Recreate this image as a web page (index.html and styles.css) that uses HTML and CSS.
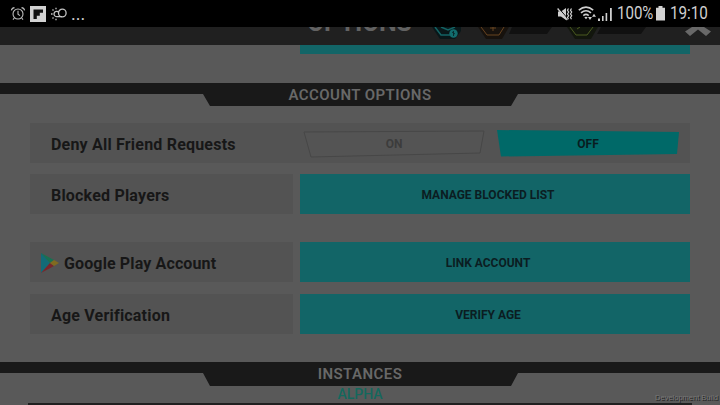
FILE: index.html
```html
<!DOCTYPE html>
<html lang="en">
<head>
<meta charset="utf-8">
<title>Options</title>
<link rel="stylesheet" href="styles.css">
</head>
<body>
<div class="statusbar">
  <div class="status-left">
    <svg width="16" height="16" viewBox="0 0 16 16" fill="none" stroke="#bdbdbd" stroke-width="1.1"><circle cx="8" cy="8" r="5"/><path d="M8 4.800V8.300L10 9.600M1.400 4.400Q1.800 2 4.500 1.600M14.600 4.400Q14.200 2 11.500 1.600M4.300 12L3 13.600M11.700 12L13 13.600"/></svg>
    <svg class="flip" width="16" height="16" viewBox="0 0 16 16"><path fill="#d2d2d2" d="M0 0h16v16H0z"/><path fill="#111" d="M3.500 3.500h9.500v3.200H9.800v3.100H6.800v3.200H3.500z"/></svg>
    <svg class="weather" width="16" height="14" viewBox="0 0 16 14" fill="none" stroke="#c4c4c4" stroke-width="1.300"><ellipse cx="11.300" cy="6" rx="3.800" ry="3.900"/><path d="M7.800 5.300A2.700 2.700 0 1 0 5.800 9.700H11"/><path d="M5 .8v1.500M1.500 2.500l1 1M0 7h1.600M1.500 11.500l1-1M5 11.800v1.500"/></svg>
    <span class="dots">...</span>
  </div>
  <div class="status-right">
    <svg width="16" height="14" viewBox="0 0 16 14" fill="none" stroke="#cfcfcf"><path fill="#cfcfcf" stroke="none" d="M1 4.500h3L9 1v12L4 9.500H1z"/><path stroke="#000" d="M1.500 .8L11 12"/><path stroke-width="1.300" d="M.6 1.500L10.300 13"/><path stroke-width="1.200" d="M11.500 1.500l-1 1.800 1.200 1.800-1.200 1.800 1.200 1.800-1.200 1.800 1 1.800M14.500 1.500l-1 1.800 1.200 1.800-1.200 1.800 1.200 1.800-1.200 1.800 1 1.800"/></svg>
    <svg class="wifi" width="19" height="15" viewBox="0 0 19 15" fill="none" stroke="#cfcfcf" stroke-width="1.600"><path d="M.8 4.200Q8 -2 15.200 4.200M3 6.900Q8 2.600 13 6.900M5.300 9.600Q8 7.300 10.700 9.600"/><path stroke="none" fill="#cfcfcf" d="M6.300 11.300Q8 10 9.700 11.300L8 13.300zM10 11h4l-2 3zM14 10.700h4l-2-3z"/></svg>
    <svg class="signal" width="14" height="14" viewBox="0 0 14 14" fill="#cfcfcf"><path d="M0 11.500h2V14H0zM4 9h1.600v5H4zM7.600 6h1.600v8H7.600zM12 1h1.800v13H12z"/></svg>
    <span class="pct">100%</span>
    <svg class="battery" width="9" height="15" viewBox="0 0 9 15"><path fill="#d2d2d2" d="M2.500 0h4v1.700H9V14.500H0V1.700h2.500z"/></svg>
    <span class="clock">19:10</span>
  </div>
</div>
<header class="header">
  <h1 class="title">OPTIONS</h1>
  <svg class="currency" width="254" height="18" viewBox="0 0 254 18">
    <path fill="#091719" d="M2 0H31V4L25 12H10z"/><path fill="none" stroke="#136364" stroke-width="1.500" d="M5 0L11 8H20M11 0L18 3L25 0"/><circle cx="23.500" cy="6.500" r="4.200" fill="#126c6d"/><path stroke="#092d2f" d="M23.500 4v5M22 5l3 2"/>
    <path fill="#111" d="M82 0H122L117 7H79zM171 0H216L211 7H167z"/>
    <path fill="#17120d" d="M48 0H79L72 12H56z"/><path fill="none" stroke="#694420" d="M51 0L57 8H69L74 0M60 1h6M63 0v4"/>
    <path fill="#12160d" d="M137 0H168L161 12H145z"/><path fill="none" stroke="#4a5a20" d="M140 0L146 8H157L163 0M147 2l3-2"/>
  </svg>
  <svg class="close" width="28" height="9" viewBox="0 0 28 9"><path fill="#686868" d="M8 0H20L27 4.500L22 9L14 2.500L6 9L1 4.500z"/></svg>
</header>
<main class="content">
  <div class="prev-row"><div class="prev-button"></div></div>
  <section class="heading"><svg class="band" width="720" height="24" viewBox="0 0 720 24"><path fill="#191919" d="M0 0H720V11H518L511 23H210L203 11H0z"/></svg><h2>ACCOUNT OPTIONS</h2></section>
  <div class="rows">
    <div class="row joined">
      <div class="label">Deny All Friend Requests</div>
      <div class="toggles">
        <div class="toggle on"><svg width="182" height="28" viewBox="0 0 182 28"><path fill="#545454" stroke="#474747" d="M1 2L181 1L177 23L8 27z"/></svg><span>ON</span></div>
        <div class="toggle off"><svg width="182" height="28" viewBox="0 0 182 28"><path fill="#006968" d="M0 0L182 2L180 24L4 26.500z"/></svg><span>OFF</span></div>
      </div>
    </div>
    <div class="row"><div class="label players">Blocked Players</div><div class="button">MANAGE BLOCKED LIST</div></div>
    <div class="row after-gap"><div class="label google"><svg width="19" height="21" viewBox="0 0 19 21"><path fill="#126b78" d="M0 0V20L9 10z"/><path fill="#187152" d="M0 0L13 7L9 10z"/><path fill="#79262c" d="M0 20L13 13L9 10z"/><path fill="#806b20" d="M13 7L18 10L13 13L9 10z"/></svg><span>Google Play Account</span></div><div class="button link">LINK ACCOUNT</div></div>
    <div class="row last"><div class="label age">Age Verification</div><div class="button verify">VERIFY AGE</div></div>
  </div>
  <section class="heading instances"><svg class="band" width="720" height="24" viewBox="0 0 720 24"><path fill="#191919" d="M0 0H720V11H518L511 24H210L203 11H0z"/></svg><h2>INSTANCES</h2></section>
  <div class="alpha">ALPHA</div>
  <div class="panel-edge"></div>
</main>
<div class="build">Development Build</div>
</body>
</html>
```
FILE: styles.css
```css
* { box-sizing: border-box; }
body { margin: 0; width: 720px; height: 405px; overflow: hidden; position: relative; display: flex; flex-direction: column; background: #595959; font-family: Roboto, sans-serif; }
svg { display: block; flex: none; }
.statusbar { height: 27px; flex: none; background: #000; display: flex; justify-content: space-between; padding: 0 13px 0 10px; color: #cfcfcf; }
.status-left, .status-right { display: flex; align-items: center; }
.flip { margin-left: 4px; }
.weather { margin-left: 5px; }
.dots { font-size: 18px; line-height: 20px; margin-left: 4px; }
.wifi { margin-left: 5px; }
.signal { margin-left: 1px; }
.pct, .clock { font-size: 17.5px; line-height: 27px; white-space: nowrap; transform-origin: left center; }
.pct { width: 36px; margin-left: 5px; transform: scaleX(.86); }
.battery { margin-left: 3px; }
.clock { width: 37px; margin-left: 5px; transform: scaleX(.87); }
.header { height: 18px; flex: none; overflow: hidden; background: #202020; display: flex; align-items: flex-start; }
.title { margin: -19px 0 0 307px; width: 123px; font-size: 25px; line-height: 29px; font-weight: 700; letter-spacing: -0.3px; color: #626262; }
.content { flex: 1; display: flex; flex-direction: column; }
.prev-row { height: 38px; flex: none; padding-left: 300px; }
.prev-button { width: 390px; height: 9px; background: #126567; }
.heading { height: 24px; flex: none; display: grid; justify-items: center; }
.band, .heading h2 { grid-area: 1 / 1; }
.heading h2 { margin: 0; font-size: 15px; line-height: 24px; font-weight: 600; letter-spacing: 0.45px; color: #686868; }
.rows { display: flex; flex-direction: column; padding: 16px 30px 0; flex: none; }
.row { display: flex; height: 40px; gap: 7px; margin-bottom: 11px; }
.joined { gap: 0; background: #535353; }
.label { width: 263px; flex: none; display: flex; align-items: center; padding: 3px 0 0 21px; background: #535353; color: #171717; font-size: 16px; font-weight: 700; letter-spacing: 0.2px; white-space: nowrap; }
.joined .label { width: 273px; }
.google { padding: 3px 0 0 11px; gap: 4px; letter-spacing: .13px; }
.button { width: 390px; display: flex; align-items: center; justify-content: center; padding: 2px 14px 0 0; background: #126567; color: #0b1d22; font-size: 12px; font-weight: 700; }
.after-gap { margin-top: 17px; margin-bottom: 12px; }
.last { margin-bottom: 28px; }
.toggles { display: flex; gap: 12px; padding-top: 7px; }
.toggle { width: 182px; height: 28px; display: grid; place-items: center; font-size: 12px; font-weight: 700; color: #3c3c3c; }
.toggle svg, .toggle span { grid-area: 1 / 1; }
.off { color: #091d20; }
.alpha { height: 17px; flex: none; text-align: center; font-size: 14px; line-height: 17px; font-weight: 500; color: #14685d; }
.panel-edge { width: 664px; height: 2px; margin-left: 28px; background: #202020; flex: none; }
.build { position: absolute; right: 2px; bottom: 3px; font-family: "Liberation Sans", sans-serif; font-size: 7.5px; line-height: 9px; color: #777; text-shadow: 1px 1px #222; }
```
